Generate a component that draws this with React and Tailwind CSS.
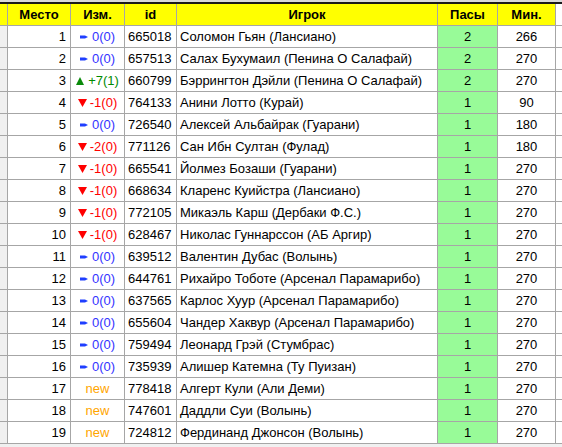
import React from "react";

const rows = [
  [1, "same", "0(0)", "665018", "Соломон Гьян (Лансиано)", 2, 266],
  [2, "same", "0(0)", "657513", "Салах Бухумаил (Пенина О Салафай)", 2, 270],
  [3, "up", "+7(1)", "660799", "Бэррингтон Дэйли (Пенина О Салафай)", 2, 270],
  [4, "down", "-1(0)", "764133", "Анини Лотто (Курай)", 1, 90],
  [5, "same", "0(0)", "726540", "Алексей Альбайрак (Гуарани)", 1, 180],
  [6, "down", "-2(0)", "771126", "Сан Ибн Султан (Фулад)", 1, 180],
  [7, "down", "-1(0)", "665541", "Йолмез Бозаши (Гуарани)", 1, 270],
  [8, "down", "-1(0)", "668634", "Кларенс Куийстра (Лансиано)", 1, 270],
  [9, "down", "-1(0)", "772105", "Микаэль Карш (Дербаки Ф.С.)", 1, 270],
  [10, "down", "-1(0)", "628467", "Николас Гуннарссон (АБ Аргир)", 1, 270],
  [11, "same", "0(0)", "639512", "Валентин Дубас (Волынь)", 1, 270],
  [12, "same", "0(0)", "644761", "Рихайро Тоботе (Арсенал Парамарибо)", 1, 270],
  [13, "same", "0(0)", "637565", "Карлос Хуур (Арсенал Парамарибо)", 1, 270],
  [14, "same", "0(0)", "655604", "Чандер Хаквур (Арсенал Парамарибо)", 1, 270],
  [15, "same", "0(0)", "759494", "Леонард Грэй (Стумбрас)", 1, 270],
  [16, "same", "0(0)", "735939", "Алишер Катемна (Ту Пуизан)", 1, 270],
  [17, "new", "new", "778418", "Алгерт Кули (Али Деми)", 1, 270],
  [18, "new", "new", "747601", "Даддли Суи (Волынь)", 1, 270],
  [19, "new", "new", "724812", "Фердинанд Джонсон (Волынь)", 1, 270],
];

const cols = "grid grid-cols-[8px_63px_54px_52px_261px_60px_58px_6px]";
const cell = "h-[22px] border-r border-b border-[#a6a6a6] flex items-center";

function Change({ kind, text }) {
  if (kind === "new") return <span className="text-[#ffa500]">new</span>;
  if (kind === "same")
    return (
      <span className="flex items-center gap-[4px] text-[#3333ff]">
        <svg width="8" height="6" viewBox="0 0 8 6">
          <polygon points="0,1.5 5,1.5 8,3 5,4.5 0,4.5" fill="#1f3fff" />
        </svg>
        {text}
      </span>
    );
  if (kind === "up")
    return (
      <span className="flex items-center gap-[4px] text-[#008a00]">
        <svg width="8" height="8" viewBox="0 0 8 8">
          <polygon points="4,0 8,8 0,8" fill="#0a8a0a" />
        </svg>
        {text}
      </span>
    );
  return (
    <span className="flex items-center gap-[3px] text-[#ff0000]">
      <svg width="9" height="8" viewBox="0 0 9 8">
        <polygon points="0,0 9,0 4.5,8" fill="#ff0000" />
      </svg>
      {text}
    </span>
  );
}

export default function App() {
  return (
    <div
      className="w-[562px] h-[447px] bg-[#f0f0f0] overflow-hidden text-[13px] text-black"
      style={{ fontFamily: '"Liberation Sans", Arial, sans-serif' }}
    >
      <div className="h-[2px] bg-[#d9d9d9]" />
      <div className="h-[2px] bg-[#1a1a1a]" />

      {/* header */}
      <div className={cols + " font-bold"}>
        <div className={cell + " bg-[#ffff00]"} />
        <div className={cell + " bg-[#ffff00] justify-center"}>Место</div>
        <div className={cell + " bg-[#ffff00] justify-center"}>Изм.</div>
        <div className={cell + " bg-[#ffff00] justify-center"}>id</div>
        <div className={cell + " bg-[#ffff00] justify-center"}>Игрок</div>
        <div className={cell + " bg-[#ffff00] justify-center"}>Пасы</div>
        <div className={cell + " bg-[#ffff00] justify-center"}>Мин.</div>
        <div className="h-[22px] bg-white border-b border-[#a6a6a6]" />
      </div>

      {rows.map((r) => (
        <div key={r[0]} className={cols}>
          <div className={cell + " bg-[#f0f0f0]"} />
          <div className={cell + " bg-white justify-end pr-[4px]"}>{r[0]}</div>
          <div className={cell + " bg-white justify-center"}>
            <Change kind={r[1]} text={r[2]} />
          </div>
          <div className={cell + " bg-white pl-[3px]"}>{r[3]}</div>
          <div className={cell + " bg-white pl-[3px] whitespace-nowrap"}>{r[4]}</div>
          <div className={cell + " bg-[#98fb98] justify-center"}>{r[5]}</div>
          <div className={cell + " bg-white justify-center"}>{r[6]}</div>
          <div className="h-[22px] bg-white border-b border-[#a6a6a6]" />
        </div>
      ))}
    </div>
  );
}
